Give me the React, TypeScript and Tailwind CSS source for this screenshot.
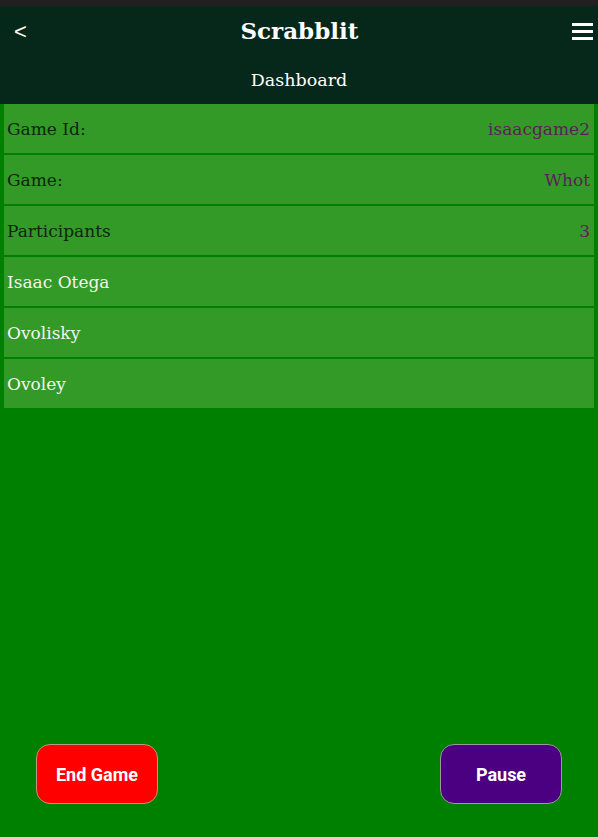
const serif = "font-['DejaVu_Serif',serif]";

const infoRows = [
  { label: "Game Id:", value: "isaacgame2" },
  { label: "Game:", value: "Whot" },
  { label: "Participants", value: "3" },
];

const players = ["Isaac Otega", "Ovolisky", "Ovoley"];

export default function App() {
  return (
    <div className={`flex h-[837px] w-[598px] flex-col bg-[#008000] ${serif}`}>
      <div className="h-[6px] bg-[#202020]" />
      <header className="flex h-[98px] flex-col bg-[#06281b] text-white">
        <div className="flex h-[50px] items-center justify-between px-[14px]">
          <span className="text-[22px] font-['Liberation_Sans',sans-serif]">&lt;</span>
          <h1 className="text-[23px] font-bold">Scrabblit</h1>
          <svg width="21" height="18" viewBox="0 0 21 18" className="mr-[-9px]">
            <rect x="0" y="1" width="21" height="3" fill="white" />
            <rect x="0" y="8" width="21" height="3" fill="white" />
            <rect x="0" y="15" width="21" height="3" fill="white" />
          </svg>
        </div>
        <div className="flex flex-1 items-center justify-center pt-[1px] text-[17.5px]">Dashboard</div>
      </header>

      <div className="flex flex-col gap-[2px] px-[4px]">
        {infoRows.map((r) => (
          <div
            key={r.label}
            className="flex h-[49px] items-center justify-between bg-[#339a28] px-[3px] pt-[3px] text-[17px]"
          >
            <span className="text-[#0e260e]">{r.label}</span>
            <span className="pr-[1px] text-[#5b1f57]">{r.value}</span>
          </div>
        ))}
        {players.map((p) => (
          <div key={p} className="flex h-[49px] items-center bg-[#339a28] px-[3px] pt-[3px] text-[17px] text-[#f2f5ee]">
            {p}
          </div>
        ))}
      </div>

      <div className="flex-1" />

      <div className="flex justify-between px-[36px] pb-[33px]">
        <button className="h-[60px] w-[122px] rounded-[14px] border border-[#b99a7a] bg-[#ff0000] font-['Roboto',sans-serif] text-[18px] font-bold text-white">
          End Game
        </button>
        <button className="h-[60px] w-[122px] rounded-[14px] border border-[#9a9a9a] bg-[#4b0082] font-['Roboto',sans-serif] text-[18px] font-bold text-white">
          Pause
        </button>
      </div>
    </div>
  );
}
